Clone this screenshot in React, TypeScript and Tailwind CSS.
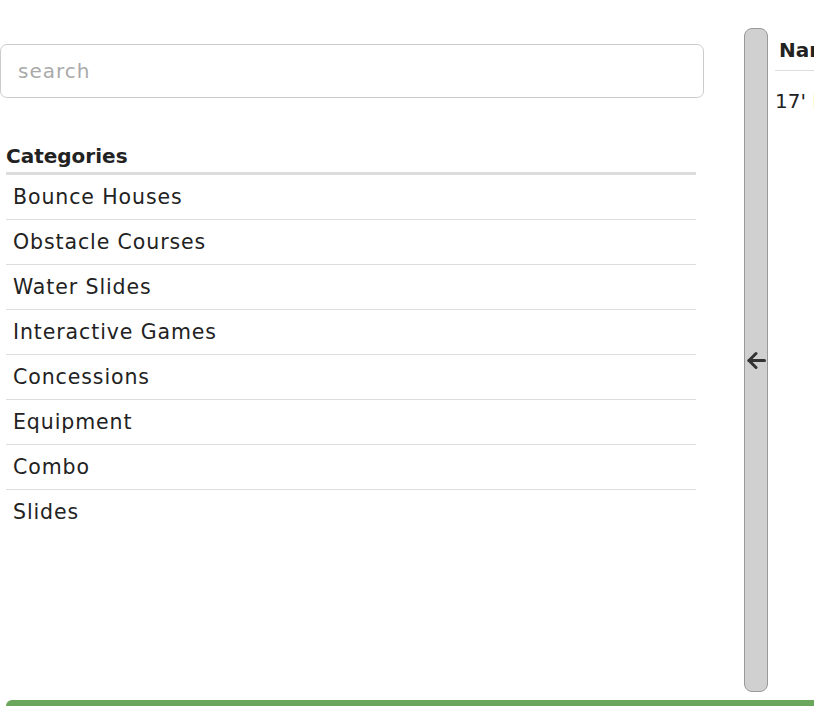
const categories = [
  "Bounce Houses",
  "Obstacle Courses",
  "Water Slides",
  "Interactive Games",
  "Concessions",
  "Equipment",
  "Combo",
  "Slides",
];

export default function App() {
  return (
    <div
      className="w-[814px] h-[706px] overflow-hidden bg-white text-[#222]"
      style={{ fontFamily: '"DejaVu Sans", "Noto Sans", sans-serif' }}
    >
      <div className="flex h-[700px]">
        {/* LEFT - search + categories */}
        <div className="w-[704px] shrink-0 pt-[44px]">
          <input
            type="text"
            placeholder="search"
            className="w-[704px] h-[54px] border border-[#ccc] rounded-[7px] px-[17px] text-[20px] tracking-[1px] placeholder:text-[#aaa] outline-none"
          />

          <div className="ml-[6px] w-[690px] mt-[46px]">
            <div className="font-bold text-[20px] leading-[24px] pb-[4px] border-b-[3px] border-[#ddd]">
              Categories
            </div>
            {categories.map((c, i) => (
              <div
                key={c}
                className={`h-[45px] flex items-center px-[7px] text-[20.5px] tracking-[0.9px] ${
                  i < categories.length - 1 ? "border-b border-[#ddd]" : ""
                }`}
              >
                {c}
              </div>
            ))}
          </div>
        </div>

        {/* Collapse toggle */}
        <div className="ml-[40px] mt-[28px] w-[24px] h-[664px] shrink-0 rounded-[8px] border border-[#999] bg-[#d0d0d0] flex items-center justify-center">
          <svg width="19" height="19" viewBox="0 0 19 19" fill="none" stroke="#333" strokeWidth="3" strokeLinecap="round" strokeLinejoin="round">
            <path d="M17.5 9.5H2" />
            <path d="M9 2.5L2 9.5L9 16.5" />
          </svg>
        </div>

        {/* Right panel, cut off */}
        <div className="ml-[7px] w-[200px] shrink-0 pt-[36px]">
          <div className="font-bold text-[20px] leading-[28px] px-[4px] pb-[6px] border-b border-[#ddd] whitespace-nowrap">
            Name
          </div>
          <div className="text-[20px] leading-[28px] pt-[16px] whitespace-nowrap">17' Bounce House</div>
        </div>
      </div>

      <div className="ml-[6px] h-[6px] bg-[#6aa75c] rounded-tl-[6px]" />
    </div>
  );
}
